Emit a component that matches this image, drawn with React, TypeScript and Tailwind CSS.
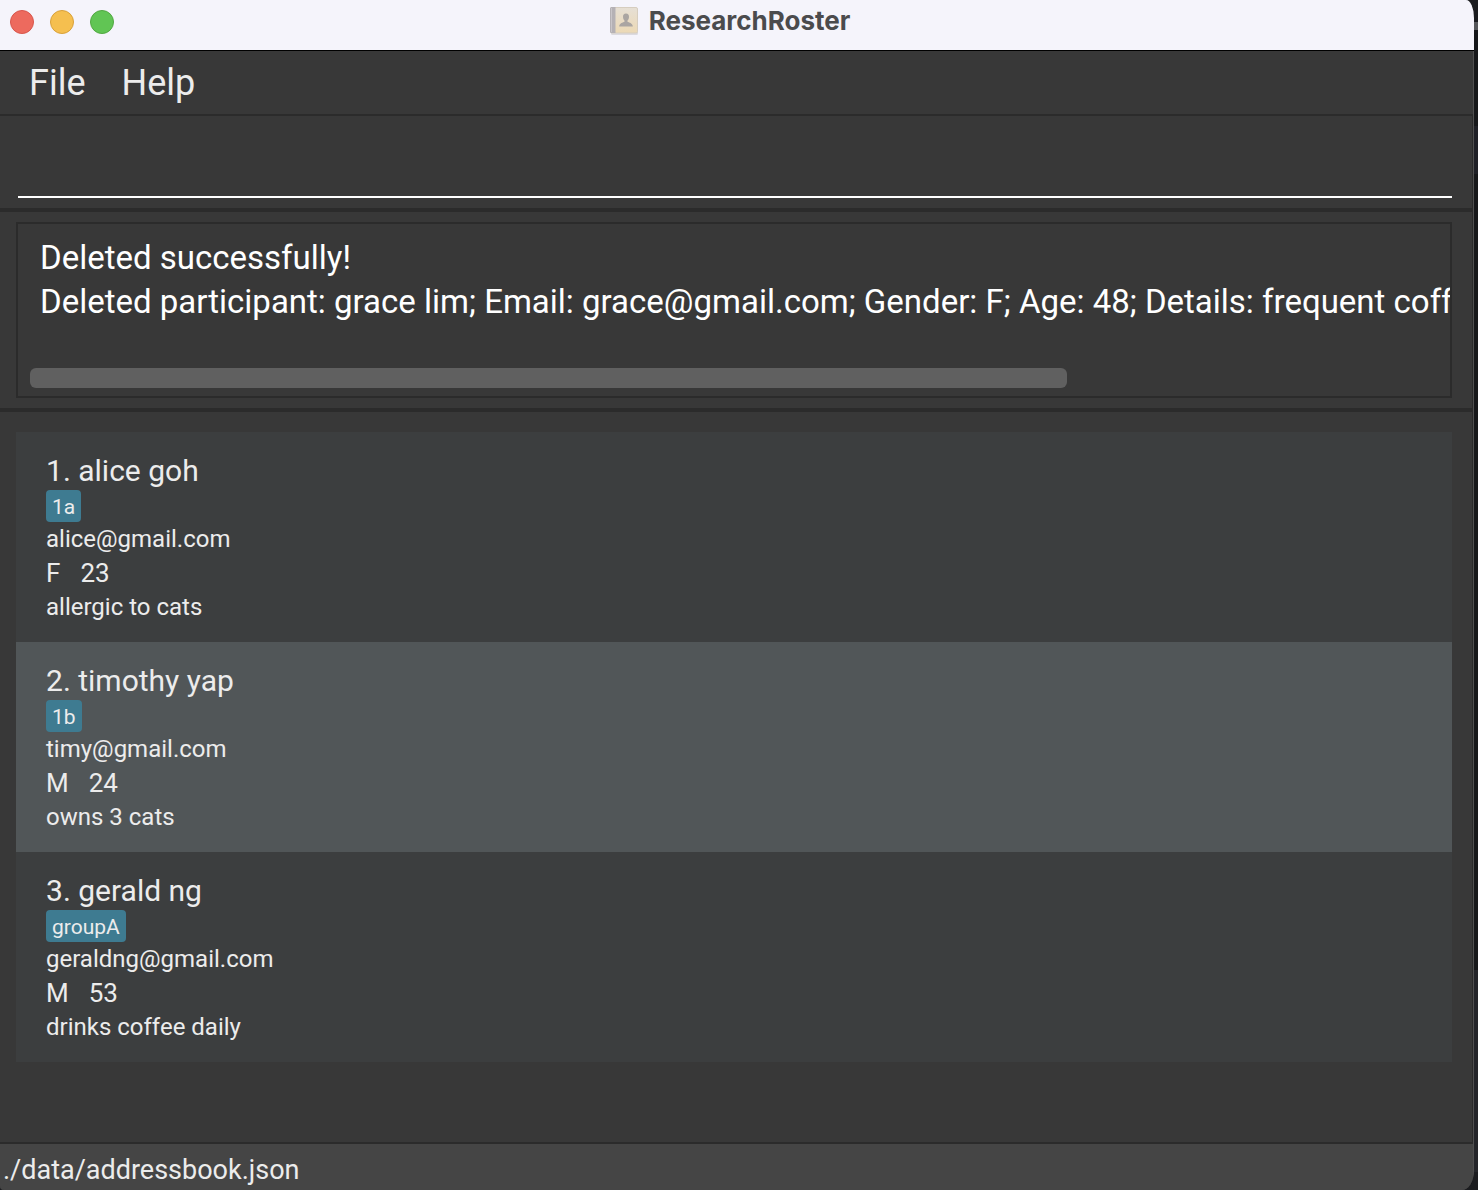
type Participant = {
  name: string;
  tag: string;
  email: string;
  gender: string;
  age: number;
  details: string;
};

const participants: Participant[] = [
  { name: 'alice goh', tag: '1a', email: 'alice@gmail.com', gender: 'F', age: 23, details: 'allergic to cats' },
  { name: 'timothy yap', tag: '1b', email: 'timy@gmail.com', gender: 'M', age: 24, details: 'owns 3 cats' },
  { name: 'gerald ng', tag: 'groupA', email: 'geraldng@gmail.com', gender: 'M', age: 53, details: 'drinks coffee daily' },
];

const resultMessage =
  'Deleted successfully!\nDeleted participant: grace lim; Email: grace@gmail.com; Gender: F; Age: 48; Details: frequent coffee';

function AddressBookIcon() {
  return (
    <svg viewBox="0 0 28 28" className="size-7" aria-hidden="true">
      <defs>
        <linearGradient id="cover" x1="0" y1="0" x2="0" y2="1">
          <stop offset="0" stopColor="#e6dfd5" />
          <stop offset="1" stopColor="#ecd9b5" />
        </linearGradient>
      </defs>
      <rect x="1" y="1" width="27" height="27" rx="1.5" fill="#dcdae0" />
      <rect x="0.5" y="0.5" width="27" height="25.5" rx="1.5" fill="url(#cover)" stroke="#d6cdbf" strokeWidth="1" />
      <path d="M1.5 0H5.5V26H1.5Q0 26 0 24.5V1.5Q0 0 1.5 0Z" fill="#b5b1b5" />
      <path d="M1.5 1V25" stroke="#c9c5c9" strokeWidth="1" />
      <path
        d="M16 6.6C13.9 6.6 12.9 8.1 13 9.9C13.1 11.6 13.8 12.7 14.5 13.4V14.8C13.2 15.6 9.2 16 9.2 19.6H22.8C22.8 16 18.8 15.6 17.5 14.8V13.4C18.2 12.7 18.9 11.6 19 9.9C19.1 8.1 18.1 6.6 16 6.6Z"
        fill="#aaa5a2"
      />
    </svg>
  );
}

function TitleBar() {
  return (
    <header className="relative flex h-[51px] items-center justify-center border-b border-black bg-[#f5f4fb] pr-[14px] pb-2 font-['Inter',sans-serif]">
      <div className="absolute left-[10px] top-[10px] flex gap-4">
        <button aria-label="Close" className="size-6 rounded-full border border-[#d8564c] bg-[#ed6a5e]" />
        <button aria-label="Minimize" className="size-6 rounded-full border border-[#d9a13a] bg-[#f5bf4f]" />
        <button aria-label="Zoom" className="size-6 rounded-full border border-[#52a842] bg-[#61c554]" />
      </div>
      <div className="flex items-center gap-[11px]">
        <AddressBookIcon />
        <h1 className="text-[26px] leading-8 font-bold text-[#4b4b4d]">ResearchRoster</h1>
      </div>
    </header>
  );
}

function ParticipantCard({ person, index }: { person: Participant; index: number }) {
  return (
    <li className="bg-[#3c3e3f] px-[30px] pt-5 pb-[18px] text-[#ececec] even:bg-[#515658]">
      <h2 className="text-[30px] leading-[38px]">
        {index}. {person.name}
      </h2>
      <div className="flex">
        <span className="h-8 rounded-[4px] bg-[#3e7b91] px-[6px] text-[21px] leading-[34px]">{person.tag}</span>
      </div>
      <div className="text-[24px] leading-[34px]">
        <p>{person.email}</p>
        <p className="flex gap-5 text-[26px]">
          <span>{person.gender}</span>
          <span>{person.age}</span>
        </p>
        <p>{person.details}</p>
      </div>
    </li>
  );
}

export default function App() {
  return (
    <div className="min-h-screen bg-[linear-gradient(#1b1c1f_22px,#56575a_22px,#56575a_30px,#17181a_30px,#17181a_126px,#1f2026_126px,#1f2026_174px,#17181a_174px,#17181a_970px,#242529_970px,#242529_1172px,#1b1c1f_1172px)] pr-1 font-['Roboto',sans-serif]">
      <div className="flex min-h-screen flex-col overflow-hidden rounded-tr-[8px_18px] rounded-br-[12px_20px] rounded-bl-[4px] bg-[#383838]">
        <TitleBar />
        <div className="flex flex-1 flex-col border-r border-[#505050]">
          <nav className="flex h-[65px] items-center border-b-2 border-[#2b2b2b] px-[11px] text-[36px] text-[#ececec]">
            <button className="px-[18px]">File</button>
            <button className="px-[18px]">Help</button>
          </nav>
          <main className="flex flex-1 flex-col border-r border-[#2b2b2b]">
            <section className="border-b-4 border-[#2b2b2b] pt-5 pr-5 pb-[10px] pl-[18px]">
              <input
                aria-label="Command"
                className="block h-[62px] w-full border-b-2 border-white bg-transparent text-[33px] text-white outline-none"
              />
            </section>
            <section className="border-b-4 border-[#2b2b2b] py-[10px] pr-5 pl-4">
              <div className="flex h-44 flex-col border-2 border-[#2b2b2b] pb-2">
                <textarea
                  aria-label="Result"
                  readOnly
                  wrap="off"
                  value={resultMessage}
                  className="block w-full flex-1 resize-none overflow-hidden bg-transparent pt-3 pl-[22px] text-[33px] leading-[44px] text-white outline-none"
                />
                <div className="mr-[18px] ml-3">
                  <div className="h-5 w-[74%] rounded-[6px] bg-[#606060]" />
                </div>
              </div>
            </section>
            <section className="flex-1 pt-5 pr-5 pb-5 pl-4">
              <ol>
                {participants.map((person, i) => (
                  <ParticipantCard key={person.email} person={person} index={i + 1} />
                ))}
              </ol>
            </section>
          </main>
          <footer className="h-12 border-t-2 border-[#2b2b2b] bg-[#454545] px-[3px] pt-1 text-[27px] leading-[44px] text-[#ececec]">
            ./data/addressbook.json
          </footer>
        </div>
      </div>
    </div>
  );
}
